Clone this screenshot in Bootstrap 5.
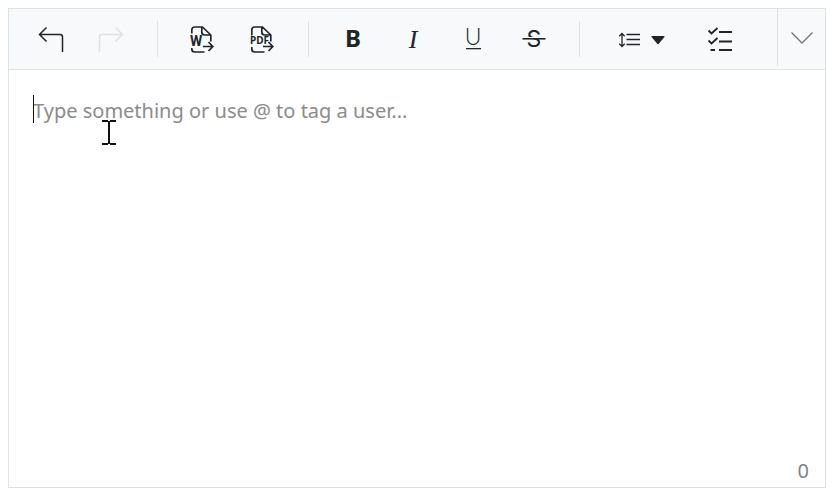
<!DOCTYPE html>
<html lang="en">
<head>
<meta charset="utf-8">
<meta name="viewport" content="width=device-width, initial-scale=1">
<title>Rich text editor</title>
<link href="https://cdn.jsdelivr.net/npm/bootstrap@5.3.0/dist/css/bootstrap.min.css" rel="stylesheet">
<style>
  body { font-family: "Noto Sans", "Open Sans", sans-serif; background: #fff; }
  .page { padding: 8px 8px 5px; }
  .editor { border: 1px solid #dee2e6; }
  .toolbar { background: #f7f9fb; border-bottom: 1px solid #dee2e6; height: 61px; }
  .tools { padding-left: 12px; }
  .tool { width: 60px; height: 60px; padding: 0; border: 0; border-radius: 0; color: #212529; }
  .tool svg, .more svg { display: block; }
  .tool-wide { width: 96px; gap: 11px; padding-right: 2px; }
  .tool:disabled { color: #dfe2e4; opacity: 1; border: 0; }
  .divider { width: 1px; height: 36px; background: #dee2e6; margin: 0 14px 0 16px; }
  .more { width: 48px; height: 57px; padding: 0; border: 0; border-left: 1px solid #dee2e6; border-radius: 0; color: #70757a; }
  .entry { padding: 24px; border: 0; resize: none; outline: 0; font-size: 20px; line-height: 34px; color: #212529; background: transparent; }
  .entry::placeholder { color: #8b8b8b; opacity: 1; }
  .caret-mark { left: 24px; top: 25px; width: 1px; height: 28px; background: #111; }
  .pointer-mark { left: 93px; top: 50px; pointer-events: none; }
  .count { font-size: 20px; line-height: 32px; padding-right: 16px; color: #7d8389; }
</style>
<script src="https://cdn.jsdelivr.net/npm/bootstrap@5.3.0/dist/js/bootstrap.bundle.min.js"></script>
</head>
<body>
<main class="page d-flex flex-column vh-100">
  <div class="editor d-flex flex-column flex-grow-1">
    <div class="toolbar d-flex align-items-start justify-content-between" role="toolbar" aria-label="Formatting">
      <div class="tools d-flex align-items-center">
        <button type="button" class="btn tool d-flex align-items-center justify-content-center" aria-label="Undo">
          <svg width="26" height="28" viewBox="0 0 26 28" fill="none" stroke="currentColor" stroke-width="1.5"><path d="M8.500 2.500 1.500 9.500 8.500 16.500M1.500 9.500H22Q24.500 9.500 24.500 12V27"/></svg>
        </button>
        <button type="button" class="btn tool d-flex align-items-center justify-content-center" aria-label="Redo" disabled>
          <svg width="26" height="28" viewBox="0 0 26 28" fill="none" stroke="currentColor" stroke-width="1.5"><path d="M17.500 2.500 24.500 9.500 17.500 16.500M24.500 9.500H4Q1.500 9.500 1.500 12V27"/></svg>
        </button>
        <span class="divider"></span>
        <button type="button" class="btn tool d-flex align-items-center justify-content-center" aria-label="Export to Word">
          <svg width="26" height="30" viewBox="0 0 26 30" fill="none" stroke="currentColor" stroke-width="1.7"><path d="M2.800 9.500V6Q2.800 3 5.800 3H13.500L21.800 11V17.500M12.800 3V8Q12.800 11 15.800 11H21.800M2.800 24V25Q2.800 28 5.800 28H15.500M14 22.500H23.500M19.500 18 23.800 22.500 19.500 27"/><text x="1" y="22" font-family="Roboto" font-size="14" font-weight="700" fill="currentColor" stroke="none">W</text></svg>
        </button>
        <button type="button" class="btn tool d-flex align-items-center justify-content-center" aria-label="Export to PDF">
          <svg width="26" height="30" viewBox="0 0 26 30" fill="none" stroke="currentColor" stroke-width="1.7"><path d="M2.800 11.500V6Q2.800 3 5.800 3H13.500L21.800 11V17.500M12.800 3V8Q12.800 11 15.800 11H21.800M2.800 23V25Q2.800 28 5.800 28H15.500M14 22.500H23.500M19.500 18 23.800 22.500 19.500 27"/><text x="1" y="20" font-family="Noto Sans" font-size="10" font-weight="700" fill="currentColor" stroke="none">PDF</text></svg>
        </button>
        <span class="divider"></span>
        <button type="button" class="btn tool d-flex align-items-center justify-content-center" aria-label="Bold">
          <svg width="40" height="40" viewBox="0 0 40 40" fill="currentColor"><text x="20" y="28" text-anchor="middle" font-family="Noto Sans" font-size="24" font-weight="700">B</text></svg>
        </button>
        <button type="button" class="btn tool d-flex align-items-center justify-content-center" aria-label="Italic">
          <svg width="40" height="40" viewBox="0 0 40 40" fill="currentColor"><text x="20" y="29" text-anchor="middle" font-family="Liberation Serif" font-size="26" font-style="italic">I</text></svg>
        </button>
        <button type="button" class="btn tool d-flex align-items-center justify-content-center" aria-label="Underline">
          <svg width="40" height="40" viewBox="0 0 40 40" fill="currentColor"><text x="20" y="26" text-anchor="middle" font-family="Lato" font-weight="300" font-size="23">U</text><path d="M13 29H28V30.300H13Z"/></svg>
        </button>
        <button type="button" class="btn tool d-flex align-items-center justify-content-center" aria-label="Strikethrough">
          <svg width="40" height="40" viewBox="0 0 40 40" fill="currentColor"><text x="21" y="28" text-anchor="middle" font-family="Inter" font-size="23">S</text><path d="M9 18H32V19H9Z" fill="#f7f9fb"/><path d="M9.500 19H32.500V20.600H9.500Z"/></svg>
        </button>
        <span class="divider"></span>
        <button type="button" class="btn tool tool-wide d-flex align-items-center justify-content-center" aria-label="Line height" aria-haspopup="true">
          <svg width="22" height="18" viewBox="0 0 22 18" fill="none" stroke="currentColor" stroke-width="1.3"><path d="M4 4V16M1.300 6.200 4 3.500 6.700 6.200M1.300 13.800 4 16.500 6.700 13.800M8.500 4.500H22M8.500 9.500H22M8.500 14.500H22"/></svg>
          <svg width="14" height="16" viewBox="0 0 14 16" fill="currentColor"><path d="M1 5H13Q14 5 13.400 5.900L7.600 13Q7 13.700 6.400 13L.6 5.900Q0 5 1 5Z"/></svg>
        </button>
        <button type="button" class="btn tool d-flex align-items-center justify-content-center" aria-label="Checklist">
          <svg width="26" height="26" viewBox="0 0 26 26" fill="none" stroke="currentColor" stroke-width="1.8"><path d="M1.500 4.500 4.500 7.500 10.500 2M1.500 14.500 4.500 17.500 10.500 12M12 6H25M12 15.500H25M12 24H25M3.500 24H8"/></svg>
        </button>
      </div>
      <button type="button" class="btn more d-flex align-items-center justify-content-center flex-shrink-0" aria-label="More tools">
        <svg width="24" height="14" viewBox="0 0 24 14" fill="none" stroke="currentColor" stroke-width="1.3"><path d="M1.500 1.500 12 12 22.500 1.500"/></svg>
      </button>
    </div>
    <div class="position-relative d-flex flex-grow-1">
      <textarea class="entry w-100" aria-label="Message" placeholder="Type something or use @ to tag a user..."></textarea>
      <span class="caret-mark position-absolute"></span>
      <svg class="pointer-mark position-absolute" width="14" height="25" viewBox="0 0 14 25" fill="none" stroke="#111" stroke-width="2"><path d="M0 1H6M8 1H14M7 1V24M0 24H6M8 24H14"/></svg>
    </div>
    <div class="count text-end">0</div>
  </div>
</main>
</body>
</html>
